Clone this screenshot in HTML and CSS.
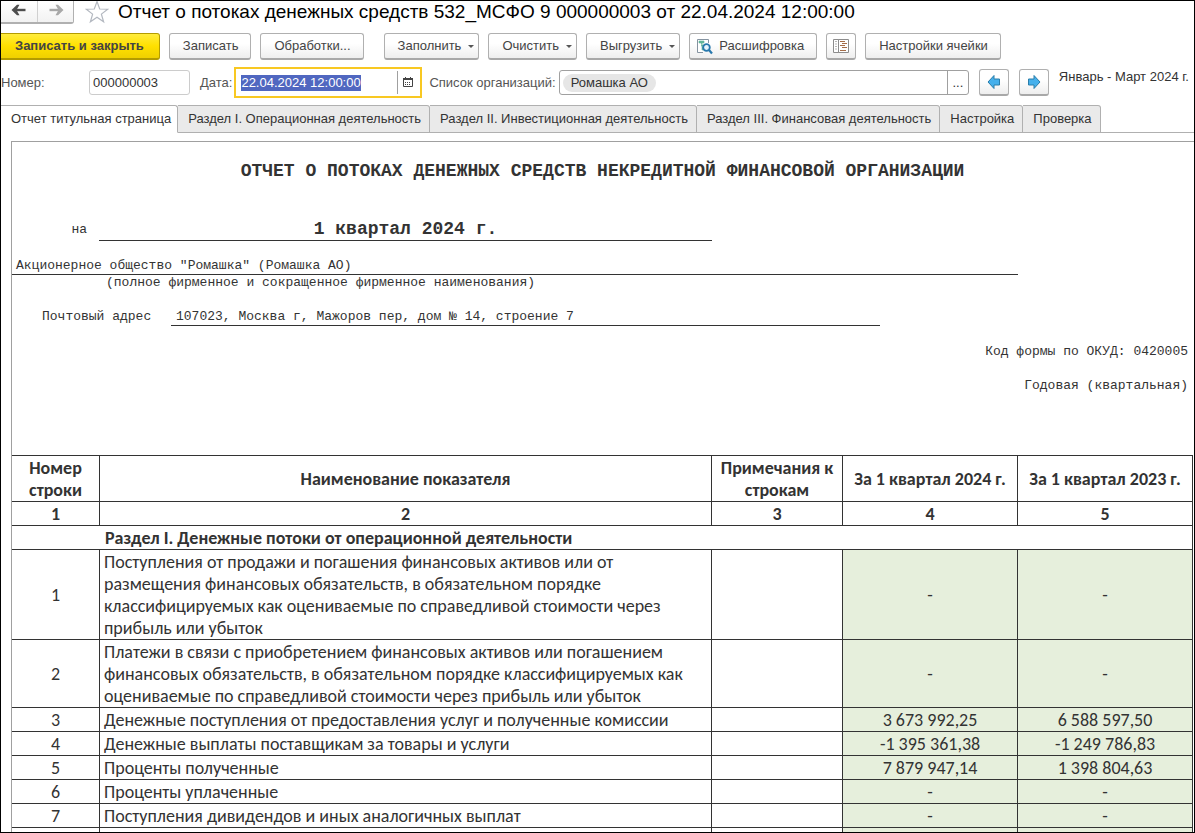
FILE: index.html
```html
<!DOCTYPE html>
<html lang="ru">
<head>
<meta charset="utf-8">
<title>Отчет о потоках денежных средств</title>
<link rel="stylesheet" href="styles.css">
</head>
<body>
<div class="window">
  <header class="titlebar">
    <div class="history">
      <button class="history-btn" type="button" aria-label="Назад"><svg width="16" height="12" viewBox="0 0 16 12"><path d="M5 6h9.500" fill="none" stroke="#4d4d4d" stroke-width="2.400"/><path d="M.5 6L6 .8h2.500L5.500 6l3 5.200H6z" fill="#4d4d4d"/></svg></button>
      <button class="history-btn" type="button" aria-label="Вперед"><svg width="16" height="12" viewBox="0 0 16 12"><path d="M1.500 6H11" fill="none" stroke="#a8a8a8" stroke-width="2.400"/><path d="M15.500 6L10 .8H7.500l3 5.200-3 5.200H10z" fill="#a8a8a8"/></svg></button>
    </div>
    <button class="star" type="button" aria-label="В избранное"><svg width="24" height="24" viewBox="0 0 24 24"><path d="M12 1.500l2.700 7.500 8 .2-6.300 4.900 2.200 7.700L12 17.200l-6.600 4.600 2.200-7.700L1.300 9.200l8-.2z" fill="#fff" stroke="#b3b8c0" stroke-width="1.200"/></svg></button>
    <h1 class="title">Отчет о потоках денежных средств 532_МСФО 9 000000003 от 22.04.2024 12:00:00</h1>
  </header>

  <div class="toolbar">
    <button class="btn primary" type="button">Записать и закрыть</button>
    <button class="btn" type="button">Записать</button>
    <button class="btn group-end" type="button">Обработки...</button>
    <button class="btn menu" type="button">Заполнить<span class="caret"></span></button>
    <button class="btn menu" type="button">Очистить<span class="caret"></span></button>
    <button class="btn menu" type="button">Выгрузить<span class="caret"></span></button>
    <button class="btn with-icon" type="button"><svg width="17" height="17" viewBox="0 0 17 17"><path d="M7 14.500H1.500v-13h11V5" fill="#fff" stroke="#8593a0"/><path d="M3 3h5v2H3zM5 5h1v7h2M5 7h3v2H6" fill="#62b59b" stroke="#62b59b" stroke-width=".6"/><circle cx="10.500" cy="9.500" r="3.300" fill="#e6f4fb" stroke="#2878ad" stroke-width="1.800"/><path d="M13 12l3 3.500" stroke="#2878ad" stroke-width="2.200"/></svg>Расшифровка</button>
    <button class="btn icon-only" type="button" aria-label="Показать строки"><svg width="16" height="16" viewBox="0 0 16 16"><path d="M.5 1.500h5v13h-5zM5.500 1.500h10v13h-10z" fill="#fff" stroke="#8c8c8c"/><path d="M2 3.500h2M2 6h2M2 8.500h2M2 11h2" stroke="#b5b5b5"/><path d="M7 3.500h5M9 5.500h5M7 7.500h5M9 9.500h5M7 12.500h6" stroke="#a56c48"/></svg></button>
    <button class="btn" type="button">Настройки ячейки</button>
  </div>

  <div class="fields">
    <label class="label number-label" for="number">Номер:</label>
    <input class="number" id="number" value="000000003">
    <label class="label date-label" for="date">Дата:</label>
    <div class="date-box">
      <input class="date" id="date" value="22.04.2024 12:00:00">
      <button class="calendar" type="button" aria-label="Календарь"><svg width="10" height="10" viewBox="0 0 10 10"><path d="M.5 1.500h9v8h-9z" fill="#fff" stroke="#444"/><path d="M0 1h10v2H0zM2 0h1v1H2zM7 0h1v1H7z" fill="#444"/><path d="M2 5.500h6M2 7.500h6" stroke="#444" stroke-dasharray="1 1"/></svg></button>
    </div>
    <label class="label org-label" for="orgs">Список организаций:</label>
    <div class="org-box">
      <span class="chip">Ромашка АО</span>
      <input class="org-input" id="orgs">
      <button class="more" type="button" aria-label="Выбрать">...</button>
    </div>
    <button class="btn arrow" type="button" aria-label="Предыдущий период"><svg width="14" height="16" viewBox="0 0 14 16"><path d="M1 8l6-6.500V5h5.500v6H7v3.500z" fill="#45b0ec" stroke="#2b7eaa"/></svg></button>
    <button class="btn arrow" type="button" aria-label="Следующий период"><svg width="14" height="16" viewBox="0 0 14 16"><path d="M13 8L7 1.500V5H1.500v6H7v3.500z" fill="#45b0ec" stroke="#2b7eaa"/></svg></button>
    <span class="period">Январь - Март 2024 г.</span>
  </div>

  <nav class="tabs" role="tablist">
    <button class="tab active" role="tab" aria-selected="true" type="button">Отчет титульная страница</button>
    <button class="tab" role="tab" type="button">Раздел I. Операционная деятельность</button>
    <button class="tab" role="tab" type="button">Раздел II. Инвестиционная деятельность</button>
    <button class="tab" role="tab" type="button">Раздел III. Финансовая деятельность</button>
    <button class="tab" role="tab" type="button">Настройка</button>
    <button class="tab" role="tab" type="button">Проверка</button>
  </nav>

  <main class="sheet">
    <section class="cover">
      <h2 class="report-title">ОТЧЕТ О ПОТОКАХ ДЕНЕЖНЫХ СРЕДСТВ НЕКРЕДИТНОЙ ФИНАНСОВОЙ ОРГАНИЗАЦИИ</h2>
      <div class="quarter"><span class="quarter-label">на</span><strong class="quarter-value">1 квартал 2024 г.</strong></div>
      <div class="company">Акционерное общество "Ромашка" (Ромашка АО)</div>
      <div class="hint">(полное фирменное и сокращенное фирменное наименования)</div>
      <div class="address"><span class="address-label">Почтовый адрес</span><span class="address-value">107023, Москва г, Мажоров пер, дом № 14, строение 7</span></div>
      <div class="form-note">Код формы по ОКУД: 0420005</div>
      <div class="form-note">Годовая (квартальная)</div>
    </section>

    <table class="report">
      <colgroup><col class="c-num"><col><col class="c-note"><col class="c-sum"><col class="c-sum"></colgroup>
      <thead>
        <tr><th>Номер<br>строки</th><th>Наименование показателя</th><th>Примечания к<br>строкам</th><th>За 1 квартал 2024 г.</th><th>За 1 квартал 2023 г.</th></tr>
        <tr><th>1</th><th>2</th><th>3</th><th>4</th><th>5</th></tr>
      </thead>
      <tbody>
        <tr><th class="section" colspan="5">Раздел I. Денежные потоки от операционной деятельности</th></tr>
        <tr><td>1</td><td class="name">Поступления от продажи и погашения финансовых активов или от<br>размещения финансовых обязательств, в обязательном порядке<br>классифицируемых как оцениваемые по справедливой стоимости через<br>прибыль или убыток</td><td></td><td class="sum">-</td><td class="sum">-</td></tr>
        <tr><td>2</td><td class="name">Платежи в связи с приобретением финансовых активов или погашением<br>финансовых обязательств, в обязательном порядке классифицируемых как<br>оцениваемые по справедливой стоимости через прибыль или убыток</td><td></td><td class="sum">-</td><td class="sum">-</td></tr>
        <tr><td>3</td><td class="name">Денежные поступления от предоставления услуг и полученные комиссии</td><td></td><td class="sum">3 673 992,25</td><td class="sum">6 588 597,50</td></tr>
        <tr><td>4</td><td class="name">Денежные выплаты поставщикам за товары и услуги</td><td></td><td class="sum">-1 395 361,38</td><td class="sum">-1 249 786,83</td></tr>
        <tr><td>5</td><td class="name">Проценты полученные</td><td></td><td class="sum">7 879 947,14</td><td class="sum">1 398 804,63</td></tr>
        <tr><td>6</td><td class="name">Проценты уплаченные</td><td></td><td class="sum">-</td><td class="sum">-</td></tr>
        <tr><td>7</td><td class="name">Поступления дивидендов и иных аналогичных выплат</td><td></td><td class="sum">-</td><td class="sum">-</td></tr>
        <tr><td></td><td></td><td></td><td class="sum"></td><td class="sum"></td></tr>
      </tbody>
    </table>
  </main>
</div>
<script src="script.js"></script>
</body>
</html>
```
FILE: script.js
```js
const dateInput = document.getElementById("date");
dateInput.focus();
dateInput.select();
```
FILE: styles.css
```css
* { box-sizing: border-box; }

body {
  margin: 0;
  background: #fff;
  color: #333;
  font: 13px/16px "Liberation Sans", Arial, sans-serif;
}

button, input { font: inherit; color: inherit; margin: 0; }

.window {
  height: 100vh;
  border: 1px solid #000;
  overflow: hidden;
}

.titlebar {
  display: flex;
  align-items: center;
  height: 23px;
}
.history {
  display: flex;
  align-self: stretch;
  border: 1px solid #b0b0b0;
  border-width: 0 1px 2px 0;
  border-radius: 0 0 3px 0;
}
.history-btn {
  width: 36px;
  padding: 0;
  border: 0;
  background: linear-gradient(#fff, #f2f2f2);
}
.history-btn + .history-btn { border-left: 1px solid #d0d0d0; }
.star {
  display: flex;
  margin: 0 9px 0 11px;
  padding: 0 0 2px;
  border: 0;
  background: none;
}
.title {
  margin: 0;
  padding-bottom: 2px;
  color: #000;
  font-size: 19px;
  line-height: 22px;
  font-weight: normal;
  white-space: nowrap;
}

.toolbar {
  display: flex;
  gap: 9px;
  margin-top: 9px;
}
.btn {
  display: flex;
  align-items: center;
  justify-content: center;
  height: 27px;
  padding: 0 12px 0 13px;
  border: 1px solid #b0b0b0;
  border-bottom: 2px solid #a8a8a8;
  border-radius: 3px;
  background: linear-gradient(#fff 40%, #eee);
  color: #444;
  white-space: nowrap;
}
.primary {
  padding: 0 15px 0 14px;
  border-color: #b39b00;
  border-left: 0;
  border-radius: 0 3px 3px 0;
  background: linear-gradient(#ffec3d, #ffe000 50%, #efd000);
  font-weight: bold;
}
.group-end { margin-right: 11px; }
.menu { gap: 7px; padding-right: 4px; }
.caret {
  border: 3px solid transparent;
  border-top-color: #555;
  border-bottom: 0;
}
.with-icon { gap: 6px; padding-left: 6px; }
.icon-only, .arrow { width: 30px; padding: 0; }

.fields {
  display: flex;
  align-items: center;
  height: 31px;
  margin-top: 7px;
  padding-right: 5px;
}
.label { color: #555; white-space: nowrap; }
.number-label { width: 88px; }
.number {
  width: 101px;
  height: 25px;
  padding: 0 3px;
  border: 1px solid #ccc;
  border-radius: 3px;
}
.date-label { margin: 0 2px 0 10px; }
.date-box {
  display: flex;
  width: 188px;
  height: 31px;
  padding: 2px 0;
  border: 2px solid #f8c822;
}
.date {
  flex: 1;
  min-width: 0;
  padding: 0 5px;
  border: 0;
  outline: 0;
}
.date::selection { background: #5067c0; color: #fff; }
.calendar {
  width: 23px;
  padding: 0 2px 0 0;
  border: 0;
  border-left: 1px solid #a0a0a0;
  background: #fff;
}
.org-label { margin: 0 3px 0 7px; }
.org-box {
  display: flex;
  flex: 1;
  align-items: center;
  height: 25px;
  padding-left: 3px;
  border: 1px solid #a0a0a0;
  border-radius: 3px;
}
.chip {
  padding: 1px 8px;
  border-radius: 9px;
  background: #e6e6e6;
  white-space: nowrap;
}
.org-input {
  flex: 1;
  min-width: 0;
  border: 0;
  outline: 0;
  background: none;
}
.more {
  width: 21px;
  height: 23px;
  padding: 0;
  border: 0;
  border-left: 1px solid #a0a0a0;
  background: none;
}
.arrow { margin-left: 10px; }
.period {
  align-self: flex-start;
  margin: 2px 0 0 10px;
  white-space: nowrap;
}

.tabs {
  display: flex;
  height: 28px;
  margin-top: 7px;
  border-bottom: 1px solid #b0b0b0;
}
.tab {
  height: 28px;
  padding: 0 8px 0 10px;
  border: 1px solid #b0b0b0;
  border-left: 0;
  border-radius: 0 3px 0 0;
  background: #eaeaea;
  white-space: nowrap;
}
.active {
  padding-right: 6px;
  border-bottom-color: #fff;
  background: #fff;
}

.sheet {
  margin: 8px 0 0 10px;
  padding-right: 1px;
  border: 1px solid #a0a0a0;
  border-width: 1px 0 0 1px;
}
.cover {
  padding: 19px 0 61px;
  font: 13px/16px "Liberation Mono", "Courier New", monospace;
}
.report-title {
  margin: 0 0 37px;
  font-size: 18px;
  line-height: 20px;
  text-align: center;
}
.quarter {
  display: flex;
  align-items: center;
  margin-right: 481px;
}
.quarter-label {
  width: 87px;
  padding-right: 12px;
  text-align: right;
}
.quarter-value {
  flex: 1;
  border-bottom: 1px solid #333;
  font-size: 18px;
  line-height: 22px;
  text-align: center;
}
.company {
  margin: 17px 175px 0 0;
  padding-left: 4px;
  border-bottom: 1px solid #333;
}
.hint { padding-left: 94px; }
.address {
  display: flex;
  margin: 18px 313px 0 0;
}
.address-label { width: 159px; padding-left: 30px; }
.address-value {
  flex: 1;
  padding-left: 5px;
  border-bottom: 1px solid #333;
}
.form-note {
  margin-top: 18px;
  padding-right: 5px;
  text-align: right;
}

.report {
  width: 100%;
  table-layout: fixed;
  border-collapse: separate;
  border-spacing: 0;
  border-top: 1px solid #333;
  font: 18px/22px Carlito, "Noto Sans", sans-serif;
}
.c-num { width: 88px; }
.c-note { width: 131px; }
.c-sum { width: 175px; }
.report th, .report td {
  height: 24px;
  padding: 1px 0 0;
  border: 1px solid #333;
  border-width: 0 1px 1px 0;
  text-align: center;
  white-space: nowrap;
}
.report .name { padding-left: 4px; text-align: left; }
.report .section { padding-left: 93px; text-align: left; }
.report .sum { background: #e6efdc; }
```
